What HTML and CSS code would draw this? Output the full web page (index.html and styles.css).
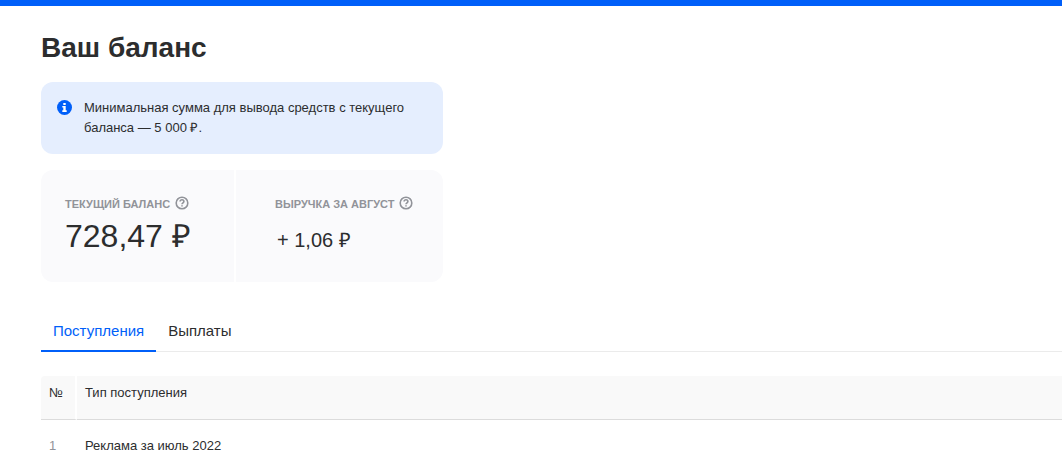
FILE: index.html
```html
<!DOCTYPE html>
<html lang="ru">
<head>
	<meta charset="UTF-8">
	<title>Ваш баланс</title>
	<link rel="stylesheet" href="styles.css">
</head>
<body>
	<div class="topbar"></div>
	<main class="page">
		<h1 class="title">Ваш баланс</h1>
		<div class="notice">
			<svg class="notice-icon" viewBox="0 0 15 15" width="15" height="15">
				<circle cx="7.5" cy="7.5" r="7.5" fill="#005ff9"/>
				<path d="M6.300 3h2.400v2H6.300zM5.300 6h3.400v4.200h1v1.700H5.300v-1.700h1V7.600h-1z" fill="#fff"/>
			</svg>
			<p class="notice-text">Минимальная сумма для вывода средств с текущего баланса — 5 000 ₽.</p>
		</div>
		<div class="cards">
			<section class="card">
				<h2 class="card-label">Текущий баланс
					<svg class="help" viewBox="0 0 14 14" width="14" height="14">
						<circle cx="7" cy="7" r="5.8"/>
						<path d="M5.1 5.6C5.1 4.5 5.9 3.8 7 3.8s1.9.7 1.9 1.7C8.9 6.700 7 6.900 7 8.300M7 9.300v1.300"/>
					</svg>
				</h2>
				<p class="card-value">728,47 ₽</p>
			</section>
			<section class="card card-income">
				<h2 class="card-label">Выручка за август
					<svg class="help" viewBox="0 0 14 14" width="14" height="14">
						<circle cx="7" cy="7" r="5.8"/>
						<path d="M5.1 5.6C5.1 4.5 5.9 3.8 7 3.8s1.9.7 1.9 1.7C8.9 6.700 7 6.900 7 8.300M7 9.300v1.300"/>
					</svg>
				</h2>
				<p class="card-value">+ 1,06 ₽</p>
			</section>
		</div>
		<nav class="tabs">
			<a class="tab selected" href="#income">Поступления</a>
			<a class="tab" href="#payouts">Выплаты</a>
		</nav>
		<table class="table" id="income">
			<thead>
				<tr>
					<th class="num">№</th>
					<th>Тип поступления</th>
				</tr>
			</thead>
			<tbody>
				<tr>
					<td class="num">1</td>
					<td>Реклама за июль 2022</td>
				</tr>
			</tbody>
		</table>
	</main>
</body>
</html>
```

FILE: styles.css
```css
*{
	margin: 0;
	padding: 0;
	box-sizing: border-box;
}
body{
	font-family: "Liberation Sans", Arial, sans-serif;
	font-size: 13px;
	line-height: 20px;
	color: #2c2d2e;
	background: #fff;
}
.topbar{
	height: 6px;
	background: #005ff9;
}
.page{
	padding: 26px 0 0 41px;
}
.title{
	font-size: 28px;
	line-height: 32px;
	margin-bottom: 18px;
}
.notice,
.cards{
	max-width: 402px;
	border-radius: 12px;
	margin-bottom: 16px;
}
.notice{
	display: flex;
	gap: 12px;
	padding: 16px;
	background: #e5eefe;
}
.notice-icon{
	flex: none;
	margin-top: 2px;
}
.cards{
	display: flex;
	gap: 2px;
	overflow: hidden;
	margin-bottom: 32px;
}
.card{
	flex: 0 0 193px;
	padding: 24px 0 16px 24px;
	background: #fafafc;
}
.card-income{
	flex: 1;
	padding-left: 39px;
}
.card-label{
	display: flex;
	align-items: center;
	gap: 5px;
	font-size: 11px;
	line-height: 20px;
	text-transform: uppercase;
	white-space: nowrap;
	color: #919399;
}
.help{
	margin-bottom: 2px;
	fill: none;
	stroke: #919399;
	stroke-width: 1.6;
}
.card-value{
	font-size: 32px;
	line-height: 44px;
}
.card-income .card-value{
	padding-left: 2px;
	font-size: 20px;
	line-height: 52px;
}
.tabs{
	display: flex;
	border-bottom: 1px solid #ebebeb;
	margin-bottom: 24px;
}
.tab{
	padding: 7px 12px 9px;
	margin-bottom: -1px;
	border-bottom: 2px solid transparent;
	font-size: 15px;
	color: #2c2d2e;
	text-decoration: none;
}
.tab.selected{
	color: #005ff9;
	border-bottom-color: #005ff9;
}
.table{
	width: 100%;
	border-spacing: 0;
}
.table th{
	padding: 7px 8px 16px;
	background: #f9f9f9;
	border-bottom: 1px solid #dcdcdc;
	font-weight: normal;
	text-align: left;
}
.table th:first-child{
	border-top-left-radius: 4px;
	border-right: 2px solid #fff;
}
.table td{
	padding: 16px 8px;
}
.table .num{
	width: 36px;
}
.table td.num{
	color: #919399;
}
```
